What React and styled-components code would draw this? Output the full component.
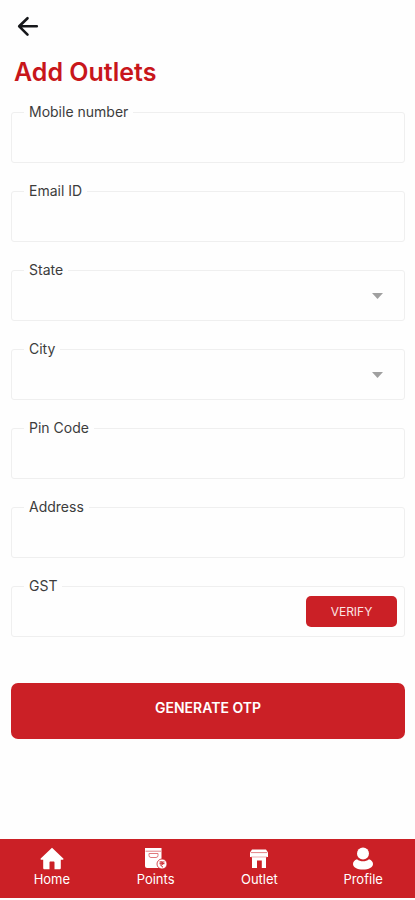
import React from "react";
import styled, { createGlobalStyle } from "styled-components";

const GlobalStyle = createGlobalStyle`
  * {
    box-sizing: border-box;
  }

  body {
    margin: 0;
    background: #fefefe;
    color: #3c3c3c;
    font-family: Inter, "Liberation Sans", sans-serif;
  }

  button, input, select {
    font: inherit;
  }
`;

const Page = styled.div`
  display: flex;
  flex-direction: column;
  min-height: 100vh;
  padding-bottom: 2px;
`;

const Header = styled.header`
  display: flex;
  flex-direction: column;
  align-items: flex-start;
  gap: 17px;
  padding: 14px 14px 0;
`;

const BackButton = styled.button`
  display: flex;
  padding: 0;
  border: 0;
  background: none;
  color: #16171a;
  cursor: pointer;
`;

const Title = styled.h1`
  margin: 0;
  color: #c8161b;
  font-size: 25px;
  font-weight: 600;
  line-height: 30px;
`;

const Form = styled.form`
  display: flex;
  flex-direction: column;
  gap: 28px;
  padding: 25px 10px 0 11px;
`;

const Field = styled.div`
  position: relative;
  display: flex;
  align-items: center;
  height: 51px;
  padding-right: ${(props) => (props.$hasAction ? "7px" : "0")};
  border: 1px solid #efefef;
  border-radius: 3px;
`;

const FieldLabel = styled.label`
  position: absolute;
  top: -9px;
  left: 12px;
  padding: 0 5px;
  background: #fefefe;
  font-size: 14px;
  line-height: 16px;
`;

const Input = styled.input`
  flex: 1;
  min-width: 0;
  height: 100%;
  padding: 0 17px;
  border: 0;
  outline: 0;
  background: transparent;
  font-size: 14px;
`;

const Select = styled.select`
  flex: 1;
  height: 100%;
  padding: 0 44px 0 17px;
  border: 0;
  outline: 0;
  appearance: none;
  background: transparent;
  font-size: 14px;
`;

const Caret = styled.svg`
  position: absolute;
  right: 21px;
  pointer-events: none;
`;

const VerifyButton = styled.button`
  width: 91px;
  height: 31px;
  padding: 0;
  border: 0;
  border-radius: 5px;
  background: #cb2026;
  color: #fbe4e4;
  font-size: 12px;
  cursor: pointer;
`;

const SubmitButton = styled.button`
  height: 56px;
  margin-top: 18px;
  padding: 0 0 7px;
  border: 0;
  border-radius: 7px;
  background: #cb2026;
  color: #fff;
  font-size: 14px;
  font-weight: 600;
  cursor: pointer;
`;

const TabBar = styled.nav`
  display: grid;
  grid-template-columns: repeat(4, 1fr);
  height: 59px;
  margin-top: auto;
  background: #cb2026;
`;

const Tab = styled.a`
  display: flex;
  flex-direction: column;
  align-items: center;
  padding-top: 8px;
  color: #fff;
  font-size: 13px;
  line-height: 16px;
  text-decoration: none;
`;

const IconBox = styled.span`
  display: flex;
  align-items: center;
  justify-content: center;
  height: 24px;
`;

const BackIcon = () => (
  <svg width="28" height="26" viewBox="0 0 28 26" fill="none" stroke="currentColor" strokeWidth="2.6" strokeLinecap="round" strokeLinejoin="round">
    <path d="M22.800 12.300H5.500M13.500 4.200L5.200 12.300l8.300 8.300" />
  </svg>
);

const HomeIcon = () => (
  <svg width="24" height="24" viewBox="0 0 24 24" fill="currentColor">
    <path d="M12 .8L.7 11.600c-.5.5-.2 1.100.5 1.100h2V21c0 .8.5 1.300 1.300 1.300h5v-6.800c0-.6.4-1 1-1h3c.6 0 1 .4 1 1v6.800h5c.8 0 1.300-.5 1.300-1.300v-8.300h2c.7 0 1-.6.5-1.100z" />
  </svg>
);

const PointsIcon = () => (
  <svg width="24" height="22" viewBox="0 0 24 22">
    <path d="M1 0h16.500v20H3Q1 20 1 18z" fill="#fff" />
    <path d="M1.500 3.200h15.500" stroke="#dc6266" strokeWidth=".8" />
    <path d="M5 5.500h9v2q0 2-2 2H7q-2 0-2-2z" fill="#fff" stroke="#e07a7d" />
    <circle cx="18" cy="16" r="5" fill="#fff" stroke="#cb2026" strokeWidth=".8" />
    <path d="M15.500 14h5M15.500 15.700h5M16.500 14c3.500 0 3.500 3 0 3l2.500 2.300" fill="none" stroke="#cb2026" />
  </svg>
);

const OutletIcon = () => (
  <svg width="20" height="20" viewBox="0 0 20 20">
    <path d="M3 .5h14l2 3V8H1V3.500z" fill="#fff" />
    <path d="M2 3.600h16" stroke="#dc6266" strokeWidth=".8" />
    <path d="M3 8h14v11h-4.200v-7.500H8V19H3z" fill="#fff" />
    <path d="M2 8h16" stroke="#e68a8d" strokeWidth=".7" />
  </svg>
);

const ProfileIcon = () => (
  <svg width="22" height="24" viewBox="0 0 22 24" fill="currentColor">
    <circle cx="11" cy="6.500" r="6" />
    <path d="M5 12.300c3.300 2.700 8.700 2.700 12 0 2.600.9 4 2.600 4 4.700 0 3.500-4.200 5.500-10 5.500S1 20.500 1 17c0-2.100 1.400-3.800 4-4.700z" />
  </svg>
);

const fields = [
  { id: "mobile", label: "Mobile number", type: "tel" },
  { id: "email", label: "Email ID", type: "email" },
  { id: "state", label: "State", type: "select" },
  { id: "city", label: "City", type: "select" },
  { id: "pin", label: "Pin Code", type: "text" },
  { id: "address", label: "Address", type: "text" },
  { id: "gst", label: "GST", type: "text", action: "VERIFY" },
];

const tabs = [
  { label: "Home", Icon: HomeIcon },
  { label: "Points", Icon: PointsIcon },
  { label: "Outlet", Icon: OutletIcon },
  { label: "Profile", Icon: ProfileIcon },
];

const FormField = ({ id, label, type, action }) => (
  <Field $hasAction={Boolean(action)}>
    <FieldLabel htmlFor={id}>{label}</FieldLabel>
    {type === "select" ? (
      <>
        <Select id={id} name={id} defaultValue="">
          <option value="" />
        </Select>
        <Caret width="11" height="6" viewBox="0 0 11 6" fill="#a0a0a0">
          <path d="M0 0h11L5.500 6z" />
        </Caret>
      </>
    ) : (
      <Input id={id} name={id} type={type} />
    )}
    {action && <VerifyButton type="button">{action}</VerifyButton>}
  </Field>
);

export default function App() {
  return (
    <Page>
      <GlobalStyle />
      <Header>
        <BackButton type="button" aria-label="Back">
          <BackIcon />
        </BackButton>
        <Title>Add Outlets</Title>
      </Header>
      <Form onSubmit={(e) => e.preventDefault()}>
        {fields.map((field) => (
          <FormField key={field.id} {...field} />
        ))}
        <SubmitButton type="submit">GENERATE OTP</SubmitButton>
      </Form>
      <TabBar>
        {tabs.map(({ label, Icon }) => (
          <Tab key={label} href="#">
            <IconBox>
              <Icon />
            </IconBox>
            {label}
          </Tab>
        ))}
      </TabBar>
    </Page>
  );
}
